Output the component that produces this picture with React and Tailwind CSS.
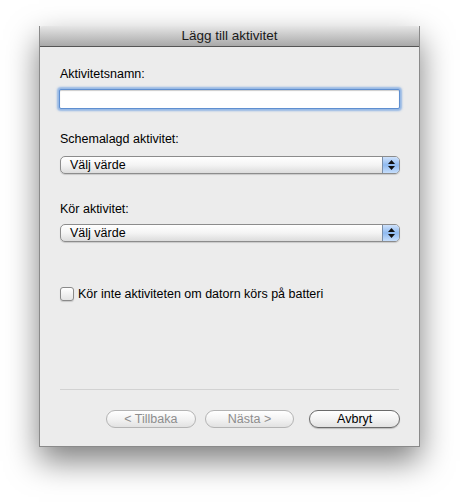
import React from "react";

function Select() {
  return (
    <div className="relative h-[18px] w-[340px] rounded-[5px] border border-[#8c8c8c] bg-gradient-to-b from-white via-[#f4f4f4] to-[#dcdcdc] shadow-[0_1px_1px_rgba(0,0,0,0.15)] flex items-center overflow-hidden">
      <span className="pl-[9px] text-[12.5px] leading-none text-black">Välj värde</span>
      <div className="ml-auto h-full w-[17px] border-l border-[#7a8ea8] bg-gradient-to-b from-[#cfe2fb] via-[#8fbaf0] to-[#c6defb] flex flex-col items-center justify-center gap-[2px]">
        <svg width="7" height="4" viewBox="0 0 7 4"><path d="M3.5 0L7 4H0z" fill="#111" /></svg>
        <svg width="7" height="4" viewBox="0 0 7 4"><path d="M0 0h7L3.5 4z" fill="#111" /></svg>
      </div>
    </div>
  );
}

function Btn({ children, disabled, w }) {
  return (
    <div
      className={`h-[18px] rounded-full border flex items-center justify-center text-[12.5px] leading-none bg-gradient-to-b from-white via-[#f3f3f3] to-[#e2e2e2] ${
        disabled ? "border-[#b4b4b4] text-[#8d8d8d]" : "border-[#6a6a6a] text-black shadow-[0_1px_1px_rgba(0,0,0,0.2)]"
      } ${w}`}
    >
      {children}
    </div>
  );
}

export default function App() {
  return (
    <div
      className="w-[460px] h-[502px] bg-white pt-[26px] pl-[39px]"
      style={{ fontFamily: '"Liberation Sans", Arial, sans-serif' }}
    >
      <div className="w-[381px] h-[421px] bg-[#ececec] border border-[#8a8a8a] border-t-0 shadow-[0_14px_30px_rgba(0,0,0,0.5)] flex flex-col">
        <div className="h-[21px] rounded-t-[4px] bg-gradient-to-b from-[#e6e6e6] to-[#a9a9a9] border-b border-[#555] flex items-center justify-center">
          <span className="text-[13.5px] text-[#1a1a1a] leading-none">Lägg till aktivitet</span>
        </div>
        <div className="flex flex-col pl-[20px] pt-[19px]">
          <div className="text-[12.5px] leading-[16px] text-black">Aktivitetsnamn:</div>
          <div className="mt-[7px] h-[20px] w-[341px] -ml-[1px] rounded-[2px] border border-[#5f8fd0] bg-white shadow-[0_0_2px_2px_rgba(110,160,225,0.7),inset_0_1px_1px_rgba(0,0,0,0.2)]" />
          <div className="mt-[22px] text-[12.5px] leading-[16px] text-black">Schemalagd aktivitet:</div>
          <div className="mt-[9px]"><Select /></div>
          <div className="mt-[27px] text-[12.5px] leading-[16px] text-black">Kör aktivitet:</div>
          <div className="mt-[7px]"><Select /></div>
          <div className="mt-[44px] flex items-center gap-[4px]">
            <div className="w-[14px] h-[14px] rounded-[3px] border border-[#8a8a8a] bg-gradient-to-b from-white to-[#e4e4e4] shadow-[0_1px_1px_rgba(0,0,0,0.15)]" />
            <span className="text-[12.5px] leading-[16px] text-black">Kör inte aktiviteten om datorn körs på batteri</span>
          </div>
          <div className="mt-[87px] h-px w-[339px] bg-[#d2d2d2]" />
          <div className="mt-[20px] flex w-[340px]">
            <Btn disabled w="ml-[46px] w-[90px]">&lt; Tillbaka</Btn>
            <Btn disabled w="ml-[9px] w-[90px]">Nästa &gt;</Btn>
            <Btn w="ml-[15px] w-[91px]">Avbryt</Btn>
          </div>
        </div>
      </div>
    </div>
  );
}
